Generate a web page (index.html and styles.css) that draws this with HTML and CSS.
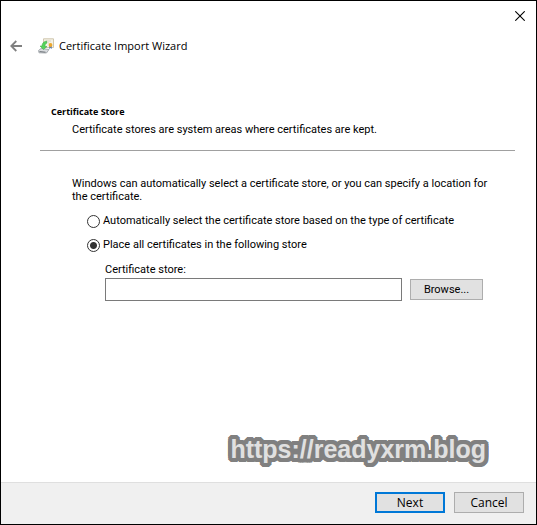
FILE: index.html
```
<!DOCTYPE html>
<html lang="en">
<head>
    <meta charset="UTF-8">
    <meta name="viewport" content="width=device-width, initial-scale=1.0">
    <title>Certificate Import Wizard</title>
    <link rel="stylesheet" href="styles.css">
</head>
<body>
    <form class="wizard">
        <div class="titlebar">
            <button type="button" class="icon-button" aria-label="Close">
                <svg width="10" height="10" viewBox="0 0 10 10" fill="none" stroke="#000" stroke-width="1.1">
                    <path d="M0.3 0.3L9.7 9.7M9.7 0.3L0.3 9.7"/>
                </svg>
            </button>
        </div>
        <header class="header">
            <button type="button" class="icon-button" aria-label="Back">
                <svg width="12" height="12" viewBox="0 0 12 12" fill="none" stroke="#808080" stroke-width="1.8">
                    <path d="M12 6H1.5M6.3 1L1.3 6L6.3 11"/>
                </svg>
            </button>
            <svg class="cert-icon" width="16" height="16" viewBox="0 0 16 16">
                <path d="M5.5 0.8H15.5V9.5H5.5Z" fill="#f4f1e4" stroke="#cfc7ad"/>
                <path d="M8 3H13M10 5H11" stroke="#d8d3c3"/>
                <path d="M0.5 12.5L3 10.5L11 11.5L8.5 15L1 14.8Z" fill="#d9dcdf" stroke="#999ea3" stroke-width="0.8"/>
                <path d="M1.5 13.6L7.5 14.2" stroke="#6c7277"/>
                <path d="M8.5 3C5.5 3.5 4 5.5 4 8H2L5.5 11.5L9 8.5H7C7 6.5 7.5 5.5 9 5Z" fill="#55d35a" stroke="#38a540" stroke-width="0.5"/>
                <path d="M11.2 7.5V11L12.5 10L13.8 11V7.5Z" fill="#5e7fb0"/>
                <circle cx="12.5" cy="7" r="1.9" fill="#eda72c"/>
            </svg>
            <h1 class="title">Certificate Import Wizard</h1>
        </header>
        <section class="intro">
            <h2 class="intro-title">Certificate Store</h2>
            <p class="intro-text">Certificate stores are system areas where certificates are kept.</p>
        </section>
        <main class="content">
            <p class="description">Windows can automatically select a certificate store, or you can specify a location for the certificate.</p>
            <div class="options">
                <label class="option">
                    <input type="radio" name="store" value="auto">
                    Automatically select the certificate store based on the type of certificate
                </label>
                <label class="option">
                    <input type="radio" name="store" value="manual" checked>
                    Place all certificates in the following store
                </label>
            </div>
            <div class="store">
                <label for="storeName">Certificate store:</label>
                <div class="store-row">
                    <input type="text" id="storeName">
                    <button type="button" class="button">Browse...</button>
                </div>
            </div>
        </main>
        <div class="watermark">https://readyxrm.blog</div>
        <footer class="footer">
            <button type="submit" class="button button-large button-default">Next</button>
            <button type="button" class="button button-large">Cancel</button>
        </footer>
    </form>
</body>
</html>
```
FILE: styles.css
```
* {
    box-sizing: border-box;
}
body {
    margin: 0;
    background-color: #fff;
    color: #000;
    font-family: Tahoma, Roboto, sans-serif;
    font-size: 11px;
    line-height: 13px;
}
h1, h2, p {
    margin: 0;
}
.wizard {
    display: flex;
    flex-direction: column;
    min-height: 100vh;
    border: 1px solid #000;
}
.titlebar {
    display: flex;
    justify-content: flex-end;
    padding: 10px 11px 0;
}
.icon-button {
    display: flex;
    padding: 0;
    border: none;
    background: none;
}
.header {
    display: flex;
    align-items: center;
    padding: 16px 9px 0;
}
.cert-icon {
    margin: 0 5px 0 16px;
}
.title {
    font-family: "Segoe UI", "Open Sans", sans-serif;
    font-size: 11px;
    font-weight: normal;
    line-height: 18px;
}
.intro {
    margin: 50px 21px 0 39px;
    padding: 0 11px 14px;
    border-bottom: 1px solid #a0a0a0;
}
.intro-title {
    font-family: "Segoe UI", "Open Sans", sans-serif;
    font-size: 9px;
    font-weight: bold;
}
.intro-text {
    margin-top: 5px;
    padding-left: 21px;
}
.content {
    padding: 26px 40px 0 71px;
}
.options {
    display: flex;
    flex-direction: column;
    gap: 10px;
    margin-top: 11px;
    padding-left: 15px;
}
.option {
    display: flex;
    align-items: center;
    gap: 3px;
    line-height: 14px;
}
.option input {
    appearance: none;
    flex: none;
    width: 13px;
    height: 13px;
    margin: 0;
    border: 1px solid #333;
    border-radius: 50%;
    background-color: #fff;
}
.option input:checked {
    background-image: radial-gradient(circle, #333 3px, transparent 4px);
}
.store {
    margin-top: 11px;
    padding: 0 13px 0 33px;
}
.store-row {
    display: flex;
    align-items: center;
    gap: 8px;
    margin-top: 2px;
}
.store-row input {
    flex: 1;
    min-width: 0;
    height: 23px;
    padding: 2px 4px;
    border: 1px solid #7a7a7a;
    font: inherit;
}
.button {
    width: 73px;
    height: 21px;
    padding: 0;
    border: 1px solid #adadad;
    background-color: #e1e1e1;
    color: #000;
    font: inherit;
}
.button-large {
    width: 70px;
    font-family: "Segoe UI", "Open Sans", sans-serif;
    font-size: 12px;
}
.button-default {
    border: 2px solid #0078d7;
}
.watermark {
    align-self: flex-end;
    margin-top: auto;
    padding: 0 50px 19px 0;
    color: #e0e0e0;
    font-family: Arial, "Liberation Sans", sans-serif;
    font-size: 25px;
    font-weight: bold;
    line-height: 28px;
    text-shadow:
        4px 0 #808080, -4px 0 #808080, 0 4px #808080, 0 -4px #808080,
        4px 2px #808080, 4px -2px #808080, -4px 2px #808080, -4px -2px #808080,
        2px 4px #808080, 2px -4px #808080, -2px 4px #808080, -2px -4px #808080,
        3px 3px #808080, 3px -3px #808080, -3px 3px #808080, -3px -3px #808080,
        2px 0 #808080, -2px 0 #808080, 0 2px #808080, 0 -2px #808080;
}
.footer {
    display: flex;
    justify-content: flex-end;
    gap: 9px;
    padding: 9px 12px 11px;
    border-top: 1px solid #dfdfdf;
    background-color: #f0f0f0;
}
```
